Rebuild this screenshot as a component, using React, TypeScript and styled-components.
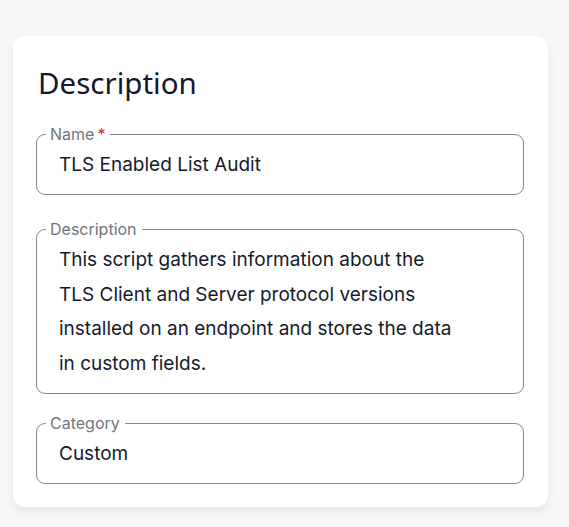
import styled, { createGlobalStyle } from 'styled-components';

const GlobalStyle = createGlobalStyle`
  html, body {
    margin: 0;
    padding: 0;
    background: #f7f7f7;
  }
  body {
    font-family: Inter, "Liberation Sans", sans-serif;
  }
`;

const fields = [
  { name: 'name', label: 'Name', required: true, value: 'TLS Enabled List Audit', multiline: false },
  {
    name: 'description',
    label: 'Description',
    required: false,
    value:
      'This script gathers information about the TLS Client and Server protocol versions installed on an endpoint and stores the data in custom fields.',
    multiline: true,
  },
  { name: 'category', label: 'Category', required: false, value: 'Custom', multiline: false },
];

const App = () => {
  return (
    <>
      <GlobalStyle />
      <Page>
        <Card>
          <Title>Description</Title>
          <Fields>
            {fields.map((item) => (
              <FieldSet key={item.name} multiline={item.multiline}>
                <Legend>
                  {item.label}
                  {item.required && <Required>*</Required>}
                </Legend>
                <Value multiline={item.multiline}>{item.value}</Value>
              </FieldSet>
            ))}
          </Fields>
        </Card>
      </Page>
    </>
  );
};

const Page = styled.div`
  padding: 36px 21px 20px 13px;
`;

const Card = styled.div`
  width: 535px;
  box-sizing: border-box;
  background: #ffffff;
  border-radius: 12px;
  padding: 29px 24px 23px 23px;
  box-shadow: 0 5px 10px rgba(0, 0, 0, 0.07);
`;

const Title = styled.h2`
  margin: 0 0 23px 2px;
  font-family: "Noto Sans", "Open Sans", sans-serif;
  font-weight: 400;
  font-size: 29.5px;
  line-height: 36px;
  height: 36px;
  color: #14182b;
`;

const Fields = styled.div`
  display: flex;
  flex-direction: column;
`;

const FieldSet = styled.fieldset<{ multiline: boolean }>`
  margin: 0;
  margin-bottom: ${(props) => (props.multiline ? '19px' : '24px')};
  padding: 0 22px;
  border: 1px solid #8a8a8f;
  border-radius: 9px;
  min-width: 0;
  &:last-child {
    margin-bottom: 0;
  }
`;

const Legend = styled.legend`
  margin-left: -13px;
  padding: 0 5px 0 4px;
  font-size: 16px;
  line-height: 20px;
  color: #707580;
`;

const Required = styled.span`
  color: #c8283c;
  margin-left: 3px;
`;

const Value = styled.div<{ multiline: boolean }>`
  font-size: 19px;
  color: #161a2c;
  max-width: ${(props) => (props.multiline ? '398px' : 'none')};
  line-height: ${(props) => (props.multiline ? '34.5px' : '28px')};
  padding: ${(props) => (props.multiline ? '4px 0 12px 0' : '7px 0 15px 0')};
`;

export default App;
